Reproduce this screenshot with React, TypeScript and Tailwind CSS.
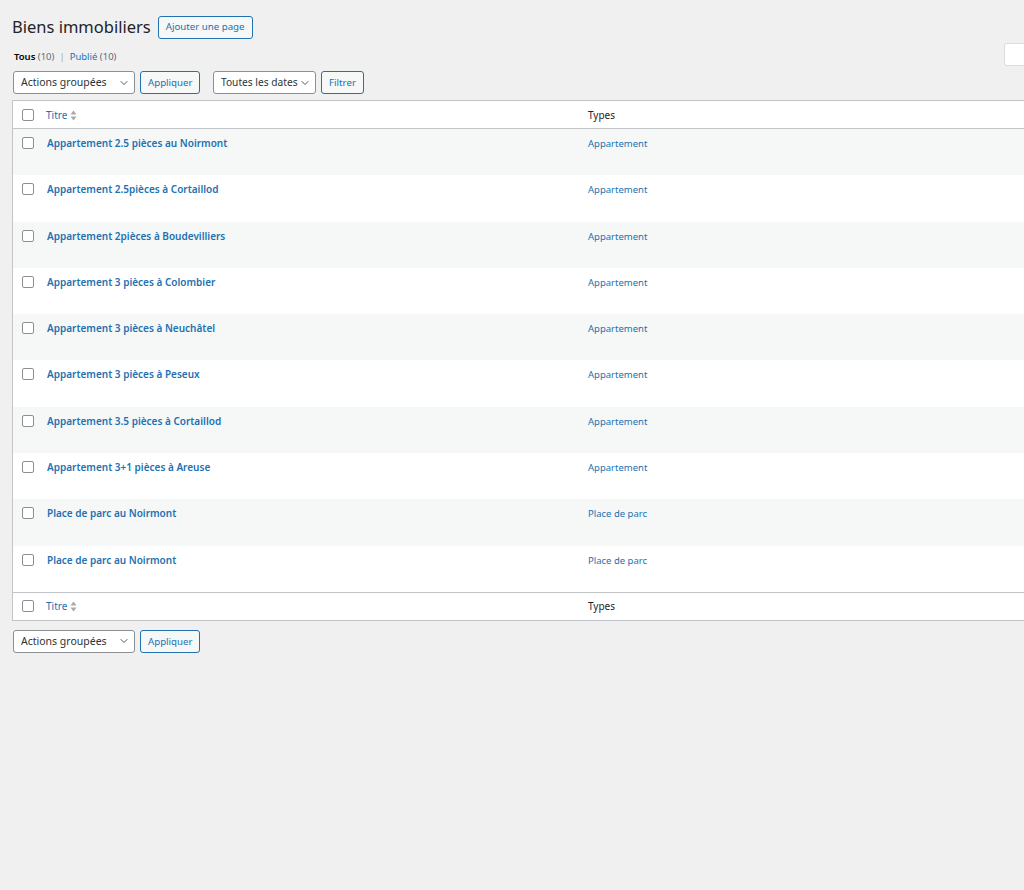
import { ChevronDown } from "lucide-react";

const rows = [
  { title: "Appartement 2.5 pièces au Noirmont", type: "Appartement" },
  { title: "Appartement 2.5pièces à Cortaillod", type: "Appartement" },
  { title: "Appartement 2pièces à Boudevilliers", type: "Appartement" },
  { title: "Appartement 3 pièces à Colombier", type: "Appartement" },
  { title: "Appartement 3 pièces à Neuchâtel", type: "Appartement" },
  { title: "Appartement 3 pièces à Peseux", type: "Appartement" },
  { title: "Appartement 3.5 pièces à Cortaillod", type: "Appartement" },
  { title: "Appartement 3+1 pièces à Areuse", type: "Appartement" },
  { title: "Place de parc au Noirmont", type: "Place de parc" },
  { title: "Place de parc au Noirmont", type: "Place de parc" },
];

const Checkbox = () => (
  <span className="block w-[12px] h-[12px] rounded-[2px] border border-[#8c8f94] bg-white" />
);

const SortIcon = () => (
  <svg width="7" height="11" viewBox="0 0 7 11" className="ml-[3px]">
    <path d="M0.5 4.5 L3.5 0.5 L6.5 4.5 Z" fill="#a7aaad" />
    <path d="M0.5 6.5 L3.5 10.5 L6.5 6.5 Z" fill="#a7aaad" />
  </svg>
);

const Select = ({ label, width, text = "text-[10.5px]" }: { label: string; width: string; text?: string }) => (
  <div
    className={`${width} ${text} h-[23px] flex items-center justify-between whitespace-nowrap pl-[7px] pr-[4px] bg-white border border-[#8c8f94] rounded-[3px] text-[#2c3338]`}
  >
    <span>{label}</span>
    <ChevronDown className="w-[12px] h-[12px] shrink-0 text-[#50575e]" strokeWidth={2} />
  </div>
);

const Button = ({ label, className = "" }: { label: string; className?: string }) => (
  <button
    className={`h-[23px] px-[7px] bg-[#f6f7f7] border border-[#2271b1] rounded-[3px] text-[9.7px] text-[#2271b1] leading-none whitespace-nowrap ${className}`}
  >
    {label}
  </button>
);

const HeaderRow = ({ top }: { top: boolean }) => (
  <div
    className={`flex items-center h-[28px] bg-white ${top ? "border-b border-[#c3c4c7]" : "border-t border-[#c3c4c7]"}`}
  >
    <div className="w-[33px] flex pl-[9px]">
      <Checkbox />
    </div>
    <div className="w-[542px] flex items-center text-[10px] text-[#2271b1] pt-[1px]">
      Titre
      <SortIcon />
    </div>
    <div className="text-[10px] text-[#1d2327] pt-[1px]">Types</div>
  </div>
);

export default function App() {
  return (
    <div
      className="w-screen min-h-[890px] bg-[#f0f0f1] overflow-hidden"
      style={{ fontFamily: '"Noto Sans", "Open Sans", sans-serif' }}
    >
      <div className="w-[1080px] pl-[12px] pt-[15px]">
        <div className="flex items-center">
          <h1 className="text-[16.5px] text-[#1d2327] leading-[24px]">Biens immobiliers</h1>
          <Button label="Ajouter une page" className="ml-[7px] h-[22px]" />
        </div>

        <div className="flex items-start justify-between mt-[5px]">
          <div className="text-[9.5px] text-[#646970] pt-[6px] pl-[2px]">
            <span className="font-semibold text-black">Tous</span> (10)
            <span className="mx-[5px] text-[#a7aaad]">|</span>
            <span className="text-[#2271b1]">Publié</span> (10)
          </div>
          <div className="w-[76px] h-[23px] bg-white border border-[#dcdcde] rounded-l-[3px] mt-[-1px]" />
        </div>

        <div className="flex items-center mt-[5px] ml-[1px]">
          <Select label="Actions groupées" width="w-[122px]" />
          <Button label="Appliquer" className="ml-[5px] w-[60px]" />
          <Select label="Toutes les dates" width="w-[103px] ml-[13px]" text="text-[10.2px]" />
          <Button label="Filtrer" className="ml-[5px] w-[43px]" />
        </div>

        <div className="mt-[6px] border border-[#c3c4c7] bg-white">
          <HeaderRow top />
          {rows.map((r, i) => (
            <div
              key={i}
              className={`flex items-start h-[46.3px] ${i % 2 === 0 ? "bg-[#f6f7f7]" : "bg-white"}`}
            >
              <div className="w-[33px] flex pl-[9px] pt-[8px]">
                <Checkbox />
              </div>
              <div className="w-[542px] pl-[1px] pt-[6px] text-[10px] font-semibold text-[#2271b1] leading-[16px]">
                {r.title}
              </div>
              <div className="pt-[7px] text-[9.5px] text-[#2271b1] leading-[16px]">{r.type}</div>
            </div>
          ))}
          <HeaderRow top={false} />
        </div>

        <div className="flex items-center mt-[9px] ml-[1px]">
          <Select label="Actions groupées" width="w-[122px]" />
          <Button label="Appliquer" className="ml-[5px] w-[60px]" />
        </div>
      </div>
    </div>
  );
}
